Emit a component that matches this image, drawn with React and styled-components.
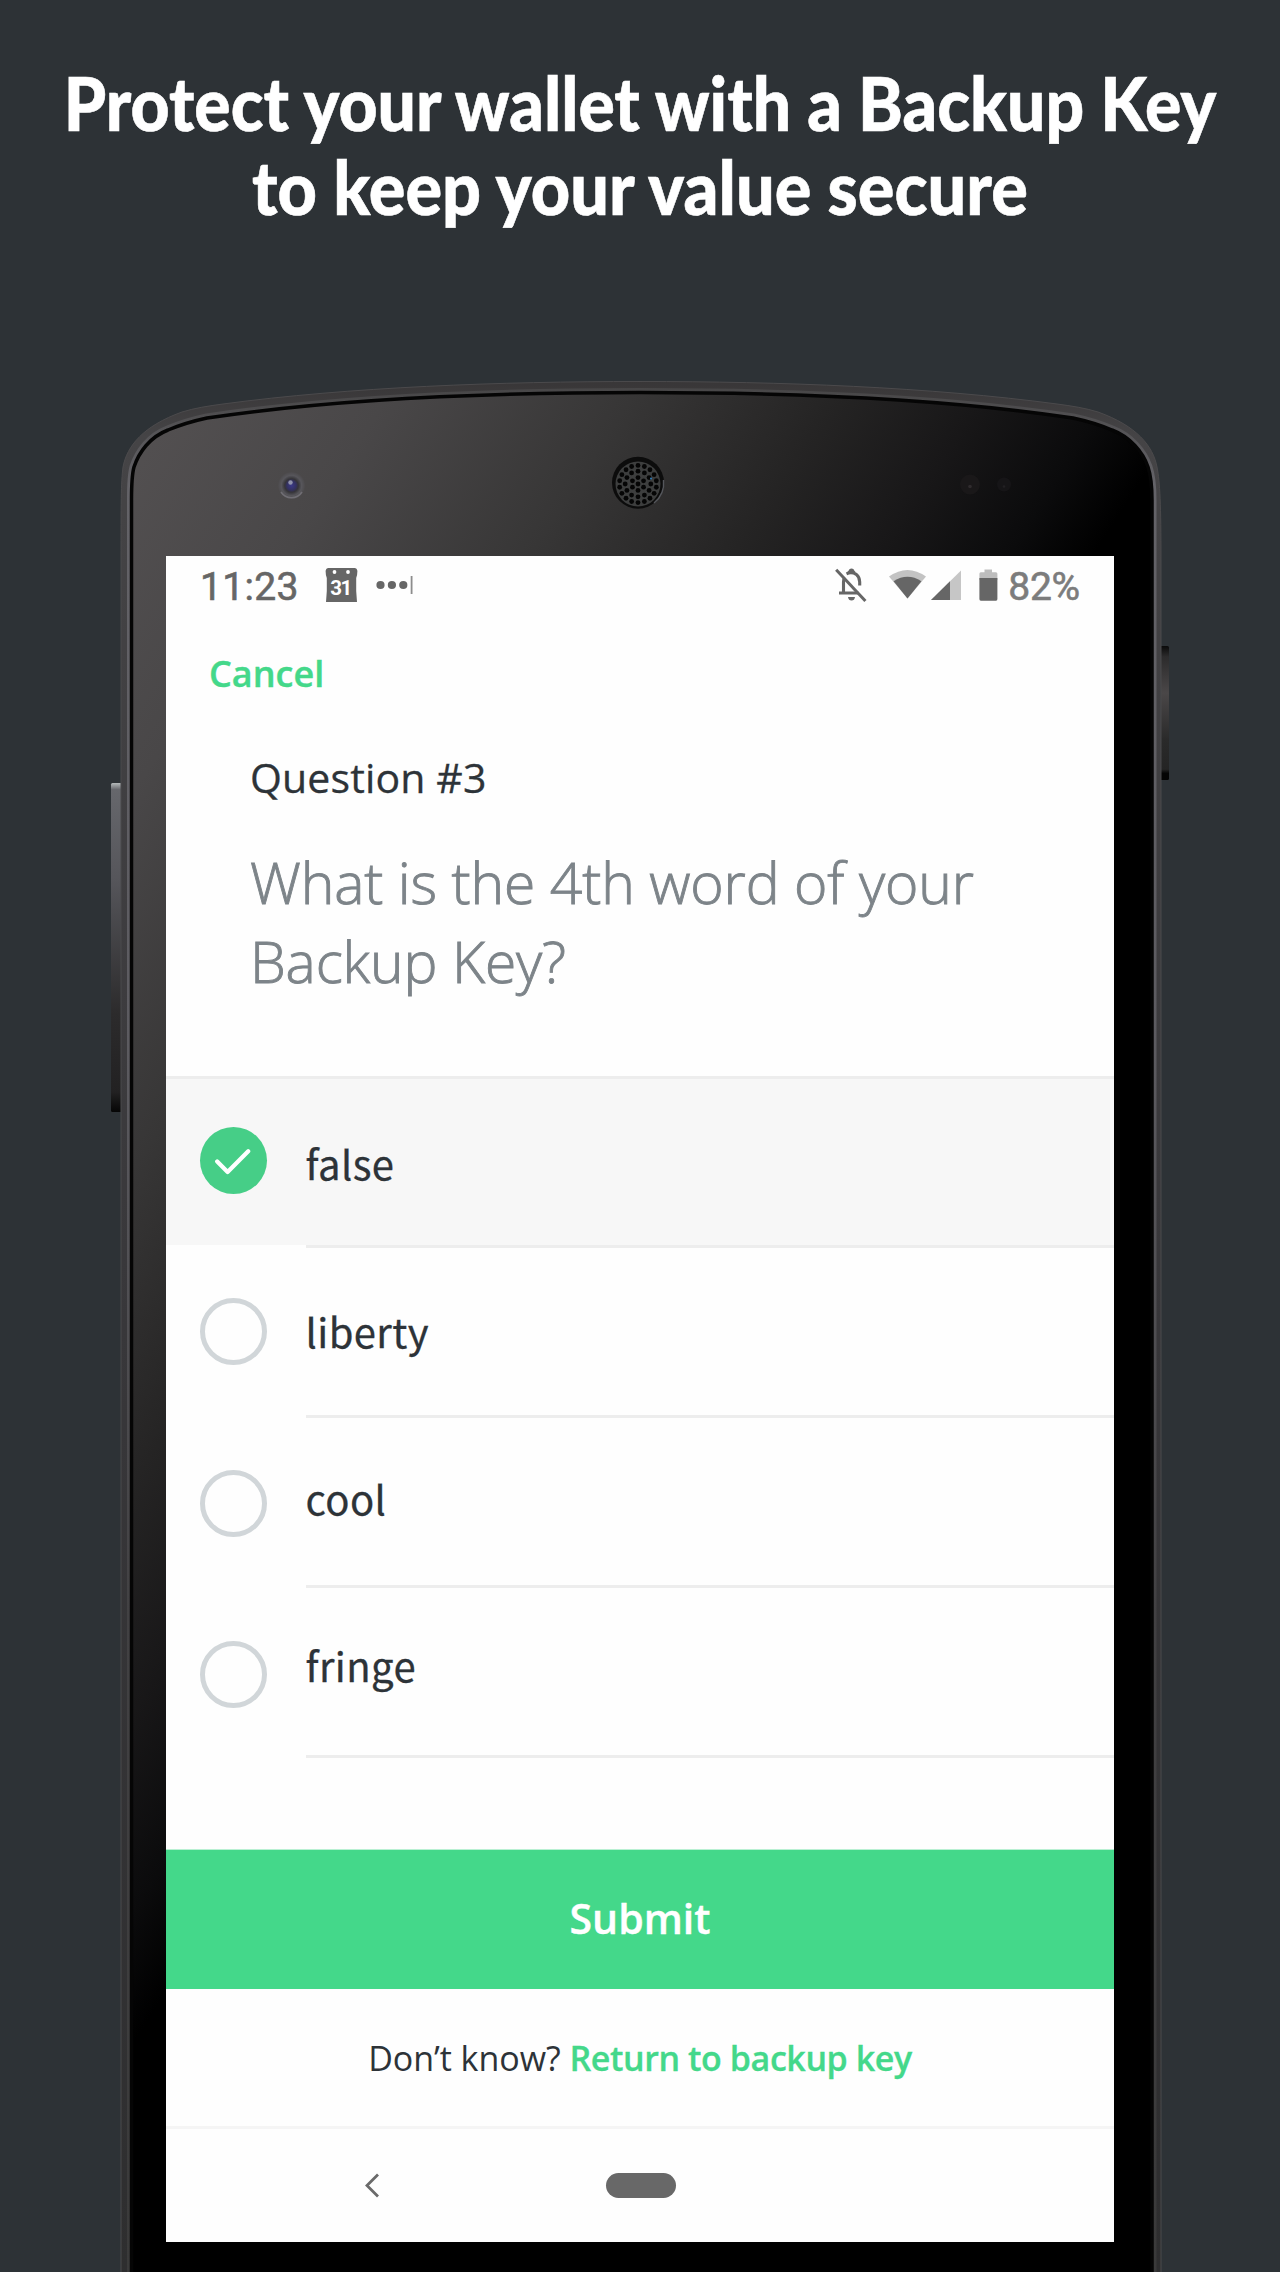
import React, { useState } from "react";
import styled, { createGlobalStyle } from "styled-components";

const GlobalStyle = createGlobalStyle`
  *, *::before, *::after { box-sizing: border-box; }
  body { margin: 0; background: #2d3236; }
  h1, h2, p { margin: 0; font-weight: inherit; }
  button { border: 0; padding: 0; background: none; font: inherit; color: inherit; text-align: inherit; cursor: pointer; }
`;

const humanist = `"Open Sans", "Noto Sans", sans-serif`;
const green = "#44d88a";
const ink = "#2d3338";

const Page = styled.main`
  width: 1280px;
  height: 2272px;
  overflow: hidden;
  background: #2d3236;
  display: flex;
  flex-direction: column;
`;

const Headline = styled.h1`
  height: 370px;
  flex: none;
  padding-top: 61px;
  display: flex;
  flex-direction: column;
  align-items: center;
  font: 900 74px/84px Lato, sans-serif;
  color: #fff;
  white-space: nowrap;
  -webkit-text-stroke: 0.6px #fff;
`;

const HeadlineLine = styled.span`
  display: block;
  transform: scaleX(${(p) => p.$stretch});
`;

const Phone = styled.section`
  flex: none;
  display: grid;
  height: 1902px;
  > * { grid-area: 1 / 1; }
`;

const PhoneArt = styled.svg`
  display: block;
  width: 1280px;
  height: 1902px;
`;

const Screen = styled.div`
  width: 948px;
  height: 1686px;
  margin: 186px 0 0 166px;
  background: #fefefe;
  display: flex;
  flex-direction: column;
  position: relative;
`;

const StatusBar = styled.header`
  height: 60px;
  flex: none;
  padding: 8px 34px 6px 34px;
  display: flex;
  justify-content: space-between;
  font: 400 39px/46px Roboto, sans-serif;
  color: #666;
`;

const StatusGroup = styled.div`
  display: flex;
  align-items: flex-start;
`;

const Clock = styled.span`
  letter-spacing: 0.3px;
  -webkit-text-stroke: 0.6px #666;
`;

const Battery = styled.span`
  color: #7c7c7c;
  letter-spacing: -0.2px;
  -webkit-text-stroke: 0.6px #7c7c7c;
`;

const StatusIcon = styled.svg`
  display: block;
  flex: none;
  width: ${(p) => p.$w}px;
  height: 36px;
  margin-top: 3px;
  margin-left: ${(p) => p.$gap ?? 0}px;
  margin-right: ${(p) => p.$after ?? 0}px;
`;

const NavRow = styled.nav`
  height: 100px;
  flex: none;
  padding: 33px 0 0 43px;
`;

const CancelButton = styled.button`
  display: block;
  font: 600 36px/49px ${humanist};
  color: ${green};
  -webkit-text-stroke: 0.4px ${green};
`;

const Prompt = styled.div`
  height: 360px;
  flex: none;
  padding: 33px 0 0 84px;
`;

const PromptLabel = styled.h2`
  font: 400 41px/56px ${humanist};
  letter-spacing: 0.15px;
  color: ${ink};
  -webkit-text-stroke: 0.3px ${ink};
`;

const PromptText = styled.p`
  margin-top: 38px;
  width: 780px;
  font: 300 57px/79px ${humanist};
  letter-spacing: -0.15px;
  color: #7d8489;
  -webkit-text-stroke: 0.9px #7d8489;
`;

const Options = styled.div`
  height: 773px;
  flex: none;
  border-top: 3px solid #ededed;
`;

const OptionRow = styled.button`
  width: 100%;
  height: ${(p) => p.$height}px;
  padding-left: 33.5px;
  display: flex;
  align-items: flex-start;
  gap: 39px;
  background: ${(p) => (p.$selected ? "#f7f7f7" : "transparent")};
`;

const Divider = styled.div`
  height: 3px;
  margin-left: 140px;
  background: #ededed;
`;

const Radio = styled.span`
  width: 67px;
  height: 67px;
  flex: none;
  margin-top: ${(p) => p.$top}px;
  border-radius: 50%;
  border: ${(p) => (p.$selected ? "0" : "5px solid #d1d6d9")};
  background: ${(p) => (p.$selected ? "#46ce87" : "transparent")};
  display: grid;
  place-items: center;
`;

const OptionText = styled.span`
  margin-top: ${(p) => p.$top}px;
  font: 400 40px/58px "Noto Sans CJK SC", "Noto Sans", sans-serif;
  letter-spacing: 0.4px;
  color: ${ink};
  -webkit-text-stroke: 0.3px ${ink};
`;

const SubmitButton = styled.button`
  height: 140px;
  flex: none;
  padding-bottom: 4px;
  border-top: 1px solid #b9f0d3;
  background: ${green};
  background-clip: padding-box;
  color: #fff;
  font: 600 41px/56px ${humanist};
  text-align: center;
  -webkit-text-stroke: 0.4px #fff;
`;

const Help = styled.p`
  height: 140px;
  flex: none;
  border-bottom: 3px solid #f5f5f5;
  display: flex;
  align-items: center;
  justify-content: center;
  gap: 9px;
  font: 400 34px/46px ${humanist};
  color: ${ink};
`;

const HelpQuestion = styled.span`
  letter-spacing: -0.05px;
`;

const HelpLink = styled.button`
  font-weight: 600;
  letter-spacing: -0.42px;
  color: ${green};
  -webkit-text-stroke: 0.3px ${green};
`;

const SystemNav = styled.footer`
  height: 113px;
  padding-left: 199px;
  display: flex;
  align-items: center;
  gap: 226px;
`;

const HomePill = styled.span`
  width: 70px;
  height: 25px;
  border-radius: 13px;
  background: #686868;
`;

const OUTER =
  "M121 2290 L121 560 C121 505 121 482 123 467 C127 446 143 426 182 412 C195 408 208 406 223 404 C350 387 500 381.5 640 381.5 C780 381.5 930 387 1057 404 C1072 406 1085 408 1098 412 C1137 426 1153 446 1157 467 C1160 482 1161 505 1161 560 L1161 2290 Z";
const BEZEL =
  "M131.5 2290 L131.5 500 C131.5 485 131.5 476 134 467 C139 452 150 437 168 430 C180 425 193 421 207 418 C340 398 500 392.5 640 392.5 C780 392.5 940 398 1073 418 C1087 421 1100 425 1112 430 C1130 437 1143 452 1148 467 C1151 476 1152 485 1152 500 L1152 2290 Z";

const RINGS = [
  { count: 1, radius: 0, phase: 0 },
  { count: 6, radius: 6.4, phase: 30 },
  { count: 12, radius: 12.8, phase: 0 },
  { count: 18, radius: 18.6, phase: 10 },
];

function SpeakerHoles() {
  return RINGS.flatMap(({ count, radius, phase }) =>
    Array.from({ length: count }, (_, i) => {
      const a = ((phase + (360 / count) * i) * Math.PI) / 180;
      return (
        <circle
          key={`${radius}-${i}`}
          cx={638 + radius * Math.cos(a)}
          cy={484 + radius * Math.sin(a)}
          r="2.4"
        />
      );
    })
  );
}

function PhoneBody() {
  return (
    <PhoneArt viewBox="0 370 1280 1902" aria-hidden="true">
      <defs>
        <linearGradient id="glass" gradientUnits="userSpaceOnUse" x1="131" y1="400" x2="881" y2="884">
          <stop offset="0" stopColor="#545152" />
          <stop offset="0.24" stopColor="#494748" />
          <stop offset="0.47" stopColor="#373636" />
          <stop offset="0.66" stopColor="#252424" />
          <stop offset="0.8" stopColor="#181718" />
          <stop offset="0.92" stopColor="#0b0b0c" />
          <stop offset="1" stopColor="#000" />
        </linearGradient>
        <linearGradient id="rim" gradientUnits="userSpaceOnUse" x1="0" y1="380" x2="0" y2="2272">
          <stop offset="0" stopColor="#383637" />
          <stop offset="0.03" stopColor="#454446" />
          <stop offset="0.5" stopColor="#38373a" />
          <stop offset="1" stopColor="#2e2e2f" />
        </linearGradient>
        <linearGradient id="shine" gradientUnits="userSpaceOnUse" x1="0" y1="390" x2="0" y2="2272">
          <stop offset="0" stopColor="#484748" />
          <stop offset="0.05" stopColor="#646368" />
          <stop offset="0.35" stopColor="#5c5b60" />
          <stop offset="0.65" stopColor="#424143" />
          <stop offset="1" stopColor="#3a3a3a" />
        </linearGradient>
        <linearGradient id="volume" x1="0" y1="0" x2="0" y2="1">
          <stop offset="0" stopColor="#b4b9ba" />
          <stop offset="0.02" stopColor="#66676c" />
          <stop offset="0.3" stopColor="#55555a" />
          <stop offset="0.7" stopColor="#2c2b2c" />
          <stop offset="0.94" stopColor="#222122" />
          <stop offset="1" stopColor="#050505" />
        </linearGradient>
        <linearGradient id="power" x1="0" y1="0" x2="0" y2="1">
          <stop offset="0" stopColor="#0a0a0a" />
          <stop offset="0.08" stopColor="#2c2b2c" />
          <stop offset="0.35" stopColor="#4a4748" />
          <stop offset="0.7" stopColor="#2a2a2a" />
          <stop offset="0.92" stopColor="#242424" />
          <stop offset="0.95" stopColor="#040404" />
        </linearGradient>
        <radialGradient id="lens" cx="0.5" cy="0.5" r="0.5">
          <stop offset="0" stopColor="#3a3888" />
          <stop offset="0.35" stopColor="#33315f" />
          <stop offset="0.5" stopColor="#353438" />
          <stop offset="0.75" stopColor="#57565b" />
          <stop offset="1" stopColor="#4c4a4c" />
        </radialGradient>
      </defs>

      <rect x="111" y="783" width="11" height="329" rx="1.5" fill="url(#volume)" />
      <rect x="1159" y="646" width="10" height="134" rx="1.5" fill="url(#power)" />

      <path d={OUTER} fill="url(#rim)" stroke="#4b4a4c" strokeWidth="1" />
      <path d={BEZEL} fill="none" stroke="url(#shine)" strokeWidth="9" />
      <path d={BEZEL} fill="url(#glass)" stroke="#050505" strokeWidth="3.5" />

      <circle cx="291.5" cy="485.5" r="13.5" fill="url(#lens)" />
      <path d="M281 492 A12.5 12.5 0 0 0 302 492" fill="none" stroke="#706e74" strokeWidth="1.6" />
      <circle cx="290.5" cy="482.5" r="2.2" fill="#9092ac" />

      <circle cx="638" cy="482.7" r="26" fill="#0c0c0c" />
      <path d="M654 503 A26 26 0 0 0 663.5 480" fill="none" stroke="#55575c" strokeWidth="1.4" />
      <circle cx="638" cy="484" r="22.5" fill="#3d3e3e" />
      <g fill="#050505">
        <SpeakerHoles />
      </g>
      <circle cx="651" cy="478.6" r="1" fill="#2f7fc0" />

      <circle cx="970" cy="484.5" r="10" fill="#1a1819" />
      <circle cx="970" cy="486.5" r="1.8" fill="#302c2e" />
      <circle cx="1004" cy="484.5" r="7" fill="#161517" />
      <circle cx="1004" cy="486.5" r="1.3" fill="#222023" />
    </PhoneArt>
  );
}

const CalendarText = styled.text`
  font: 700 20.5px Roboto, sans-serif;
  letter-spacing: -1.5px;
  fill: #fff;
`;

function CalendarIcon() {
  return (
    <StatusIcon $w={33} $gap={26} viewBox="0 0 33 36">
      <path
        d="M3.5 1 H29.5 Q32 1 32.4 4 Q32.4 8 31.2 11 V24 L32 35 H1 L1.8 24 V11 Q.6 8 .6 4 Q1 1 3.5 1 Z"
        fill="#666"
      />
      <circle cx="9.5" cy="5" r="1.9" fill="#fff" />
      <circle cx="23" cy="5" r="1.9" fill="#fff" />
      <CalendarText x="15.6" y="27.8" textAnchor="middle">31</CalendarText>
    </StatusIcon>
  );
}

function MoreIcon() {
  return (
    <StatusIcon $w={38} $gap={18} viewBox="0 0 38 36">
      <g fill="#666">
        <circle cx="4.5" cy="18" r="4.1" />
        <circle cx="15.9" cy="18" r="4.1" />
        <circle cx="27.3" cy="18" r="4.1" />
      </g>
      <rect x="34.7" y="9" width="1.8" height="18" fill="#8d8d8d" />
    </StatusIcon>
  );
}

function BellOffIcon() {
  return (
    <StatusIcon $w={32} $after={22} viewBox="0 0 32 36">
      <path
        d="M8.5 26 V15 Q8.5 12 10 9.8 M11.5 6.8 Q16.5 4.4 21.3 7.4 Q24.7 10.2 24.7 15 V18.5 M4 26 H24"
        fill="none"
        stroke="#666"
        strokeWidth="3.1"
      />
      <path d="M12.5 6.5 V4.8 Q13.8 4 14.2 2.6 Q16.5 .6 18.8 2.6 Q19.2 4 20.4 4.8 V6.5 Z" fill="#666" />
      <path d="M13 30 H20 Q19.5 33.6 16.5 33.6 Q13.5 33.6 13 30 Z" fill="#666" />
      <path d="M1.4 3.4 L30.6 34" stroke="#fff" strokeWidth="2" transform="translate(1.7 -1.7)" />
      <path d="M1.2 2.8 L30.4 34" stroke="#666" strokeWidth="3" />
    </StatusIcon>
  );
}

function WifiIcon() {
  return (
    <StatusIcon $w={37} $after={5} viewBox="0 0 37 36">
      <path d="M0 9.6 Q18.5 -3.6 37 9.6 L18.5 31.6 Z" fill="#c3c3c3" />
      <path d="M4.6 14.2 Q18.5 5.4 32.4 14.2 L18.5 31.6 Z" fill="#666" />
    </StatusIcon>
  );
}

function SignalIcon() {
  return (
    <StatusIcon $w={30} $after={18} viewBox="0 0 30 36">
      <path d="M0 33 L30 3.5 V33 Z" fill="#c6c6c6" />
      <path d="M0 33 L19 14.2 V33 Z" fill="#666" />
    </StatusIcon>
  );
}

function BatteryIcon() {
  return (
    <StatusIcon $w={19} $after={10} viewBox="0 0 19 36">
      <path d="M5.5 2.4 H13 V5.2 H17 Q18.4 5.2 18.4 6.8 V13 H.4 V6.8 Q.4 5.2 1.8 5.2 H5.5 Z" fill="#bdbdbd" />
      <path d="M.4 11 H18.4 V32 Q18.4 33.8 17 33.8 H1.8 Q.4 33.8 .4 32 Z" fill="#666" />
    </StatusIcon>
  );
}

const options = [
  { word: "false", height: 166, radioTop: 48, textTop: 55 },
  { word: "liberty", height: 167, radioTop: 50, textTop: 54 },
  { word: "cool", height: 167, radioTop: 52, textTop: 51 },
  { word: "fringe", height: 167, radioTop: 53, textTop: 48 },
];

export default function App() {
  const [chosen, setChosen] = useState("false");

  return (
    <>
      <GlobalStyle />
      <Page>
        <Headline>
          <HeadlineLine $stretch={0.916}>Protect your wallet with a Backup Key</HeadlineLine>
          <HeadlineLine $stretch={0.924}>to keep your value secure</HeadlineLine>
        </Headline>

        <Phone>
          <PhoneBody />
          <Screen>
            <StatusBar>
              <StatusGroup>
                <Clock>11:23</Clock>
                <CalendarIcon />
                <MoreIcon />
              </StatusGroup>
              <StatusGroup>
                <BellOffIcon />
                <WifiIcon />
                <SignalIcon />
                <BatteryIcon />
                <Battery>82%</Battery>
              </StatusGroup>
            </StatusBar>

            <NavRow>
              <CancelButton>Cancel</CancelButton>
            </NavRow>

            <Prompt>
              <PromptLabel>Question #3</PromptLabel>
              <PromptText>What is the 4th word of your Backup Key?</PromptText>
            </Prompt>

            <Options>
              {options.map(({ word, height, radioTop, textTop }) => (
                <React.Fragment key={word}>
                  <OptionRow $height={height} $selected={chosen === word} onClick={() => setChosen(word)}>
                    <Radio $top={radioTop} $selected={chosen === word}>
                      {chosen === word && (
                        <svg width="36" height="28" viewBox="0 0 36 28">
                          <path
                            d="M2.2 14.5 L12.6 25 L33.2 4.2"
                            fill="none"
                            stroke="#fff"
                            strokeWidth="4.2"
                            strokeLinecap="round"
                            strokeLinejoin="round"
                          />
                        </svg>
                      )}
                    </Radio>
                    <OptionText $top={textTop}>{word}</OptionText>
                  </OptionRow>
                  <Divider />
                </React.Fragment>
              ))}
            </Options>

            <SubmitButton>Submit</SubmitButton>

            <Help>
              <HelpQuestion>Don’t know?</HelpQuestion>
              <HelpLink>Return to backup key</HelpLink>
            </Help>

            <SystemNav>
              <svg width="15" height="25" viewBox="0 0 15 25">
                <path d="M13 1.5 L2 12.5 L13 23.5" fill="none" stroke="#6a6a6a" strokeWidth="2.8" />
              </svg>
              <HomePill />
            </SystemNav>
          </Screen>
        </Phone>
      </Page>
    </>
  );
}
